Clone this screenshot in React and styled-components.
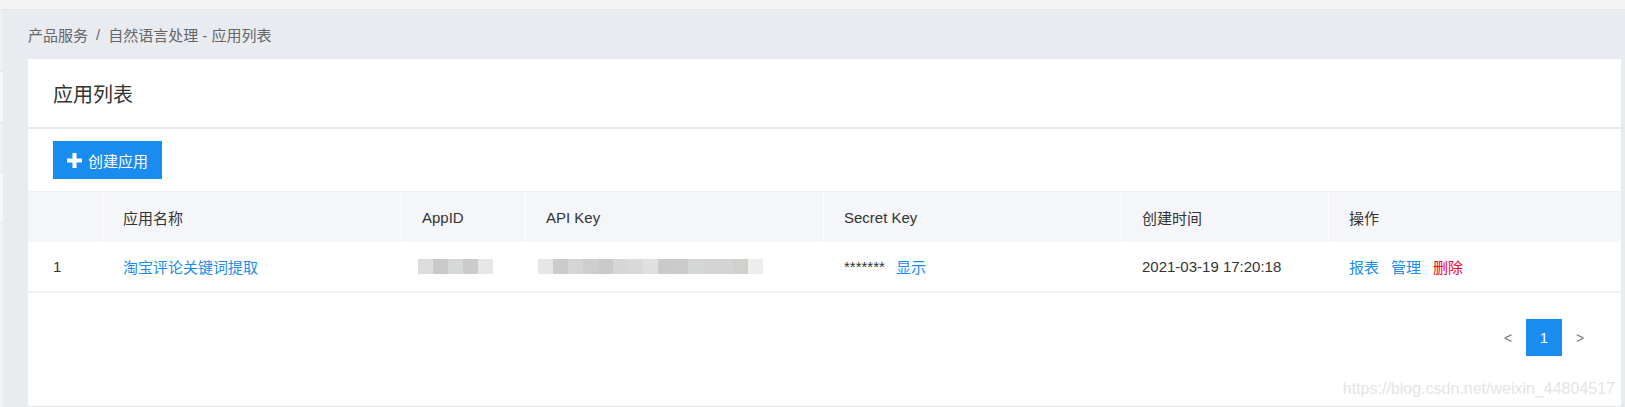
import styled, { createGlobalStyle } from "styled-components";

const GlobalStyle = createGlobalStyle`
  html, body {
    margin: 0;
    padding: 0;
    background: #e8ebf0;
  }
  body {
    font-family: "Liberation Sans", "Noto Sans CJK SC", Arial, sans-serif;
    font-size: 15px;
    color: #333;
  }
`;

const TopStrip = styled.div`
  height: 9px;
  background: #f4f4f4;
  border-bottom: 1px solid #e4e7eb;
`;

const Layout = styled.div`
  display: flex;
  height: 397px;
`;

const SideRail = styled.div`
  width: 3px;
  display: flex;
  flex-direction: column;
  background: #f3f4f6;
`;

const RailItem = styled.div`
  height: ${({ $h }) => $h}px;
  background: ${({ $alt }) => ($alt ? "#f7f8fa" : "#eef0f3")};
  border-bottom: 1px solid #e2e5e9;
`;

const Content = styled.div`
  flex: 1;
  display: flex;
  flex-direction: column;
  padding: 0 4px 0 25px;
  background: #e8ebf0;
`;

const Breadcrumb = styled.div`
  height: 49px;
  display: flex;
  align-items: center;
  gap: 8px;
  color: #666;
  font-size: 15px;
`;

const Card = styled.div`
  flex: 1;
  background: #fff;
  display: flex;
  flex-direction: column;
  border-bottom: 1px solid #e3e6eb;
  position: relative;
`;

const CardHeader = styled.div`
  height: 68px;
  display: flex;
  align-items: center;
  padding-left: 25px;
  font-size: 20px;
  color: #333;
  border-bottom: 2px solid #e6e9ee;
`;

const Toolbar = styled.div`
  padding: 12px 25px;
`;

const PrimaryButton = styled.button`
  height: 38px;
  width: 109px;
  border: none;
  border-radius: 0;
  background: #1a8cef;
  color: #fff;
  font-family: inherit;
  font-size: 15px;
  display: flex;
  align-items: center;
  justify-content: center;
  gap: 6px;
  padding: 0;
  cursor: pointer;
`;

const Grid = styled.div`
  display: grid;
  grid-template-columns: 74px 299px 124px 298px 298px 207px 1fr;
`;

const HeadRow = styled(Grid)`
  background: #f5f6fa;
  height: 50px;
  border-top: 1px solid #eef0f3;
`;

const HeadCell = styled.div`
  display: flex;
  align-items: center;
  padding-left: ${({ $first }) => ($first ? "25px" : "20px")};
  border-left: ${({ $first }) => ($first ? "none" : "1px solid #fff")};
  color: #333;
`;

const BodyRow = styled(Grid)`
  height: 49px;
  border-bottom: 2px solid #eef0f4;
`;

const Cell = styled.div`
  display: flex;
  align-items: center;
  gap: ${({ $gap }) => $gap || 0}px;
  padding-left: ${({ $first }) => ($first ? "25px" : "21px")};
  color: #333;
`;

const Link = styled.span`
  color: ${({ $danger }) => ($danger ? "#f5001e" : "#1a8cef")};
  cursor: pointer;
`;

const Mosaic = styled.div`
  display: flex;
  height: 15px;
  margin-left: ${({ $shift }) => $shift}px;
`;

const Pixel = styled.span`
  width: 15px;
  height: 15px;
  background: ${({ $c }) => $c};
`;

const Pager = styled.div`
  display: flex;
  justify-content: flex-end;
  padding: 26px 23px 0 0;
`;

const PageItem = styled.div`
  width: 36px;
  height: 37px;
  display: flex;
  align-items: center;
  justify-content: center;
  font-size: ${({ $active }) => ($active ? "15px" : "14px")};
  color: ${({ $active }) => ($active ? "#fff" : "#777")};
  background: ${({ $active }) => ($active ? "#1a8cef" : "transparent")};
`;

const Watermark = styled.div`
  position: absolute;
  right: 6px;
  bottom: 8px;
  font-size: 16px;
  color: #e4e4e4;
  font-family: "Liberation Sans", Arial, sans-serif;
`;

const appIdBlur = ["#dcdcdc", "#c9c9c9", "#d5d8d7", "#cdcccc", "#e6e7e8"];
const apiKeyBlur = [
  "#e6e6e4", "#cccbcb", "#d5d5d5", "#cfcdcf", "#cac9c9",
  "#d6d6d6", "#d9d9d9", "#dfe1df", "#cbcaca", "#cdcccc",
  "#d4d6d6", "#d6d4d2", "#d3d4d6", "#d2d0cd", "#ededed",
];

function PlusIcon() {
  return (
    <svg width="15" height="15" viewBox="0 0 15 15">
      <rect x="5.5" y="0" width="4" height="15" fill="#fff" />
      <rect x="0" y="5.5" width="15" height="4" fill="#fff" />
    </svg>
  );
}

const columns = ["", "应用名称", "AppID", "API Key", "Secret Key", "创建时间", "操作"];

export default function App() {
  return (
    <>
      <GlobalStyle />
      <TopStrip />
      <Layout>
        <SideRail>
          <RailItem $h={61} />
          <RailItem $h={50} $alt />
          <RailItem $h={49} />
          <RailItem $h={49} $alt />
        </SideRail>
        <Content>
          <Breadcrumb>
            <span>产品服务</span>
            <span>/</span>
            <span>自然语言处理 - 应用列表</span>
          </Breadcrumb>
          <Card>
            <CardHeader>应用列表</CardHeader>
            <Toolbar>
              <PrimaryButton>
                <PlusIcon />
                创建应用
              </PrimaryButton>
            </Toolbar>
            <HeadRow>
              {columns.map((c, i) => (
                <HeadCell key={i} $first={i === 0}>
                  {c}
                </HeadCell>
              ))}
            </HeadRow>
            <BodyRow>
              <Cell $first>1</Cell>
              <Cell>
                <Link>淘宝评论关键词提取</Link>
              </Cell>
              <Cell>
                <Mosaic $shift={-4}>
                  {appIdBlur.map((c, i) => (
                    <Pixel key={i} $c={c} />
                  ))}
                </Mosaic>
              </Cell>
              <Cell>
                <Mosaic $shift={-8}>
                  {apiKeyBlur.map((c, i) => (
                    <Pixel key={i} $c={c} />
                  ))}
                </Mosaic>
              </Cell>
              <Cell $gap={11}>
                <span>*******</span>
                <Link>显示</Link>
              </Cell>
              <Cell>2021-03-19 17:20:18</Cell>
              <Cell $gap={12}>
                <Link>报表</Link>
                <Link>管理</Link>
                <Link $danger>删除</Link>
              </Cell>
            </BodyRow>
            <Pager>
              <PageItem>&lt;</PageItem>
              <PageItem $active>1</PageItem>
              <PageItem>&gt;</PageItem>
            </Pager>
            <Watermark>https://blog.csdn.net/weixin_44804517</Watermark>
          </Card>
        </Content>
      </Layout>
    </>
  );
}
